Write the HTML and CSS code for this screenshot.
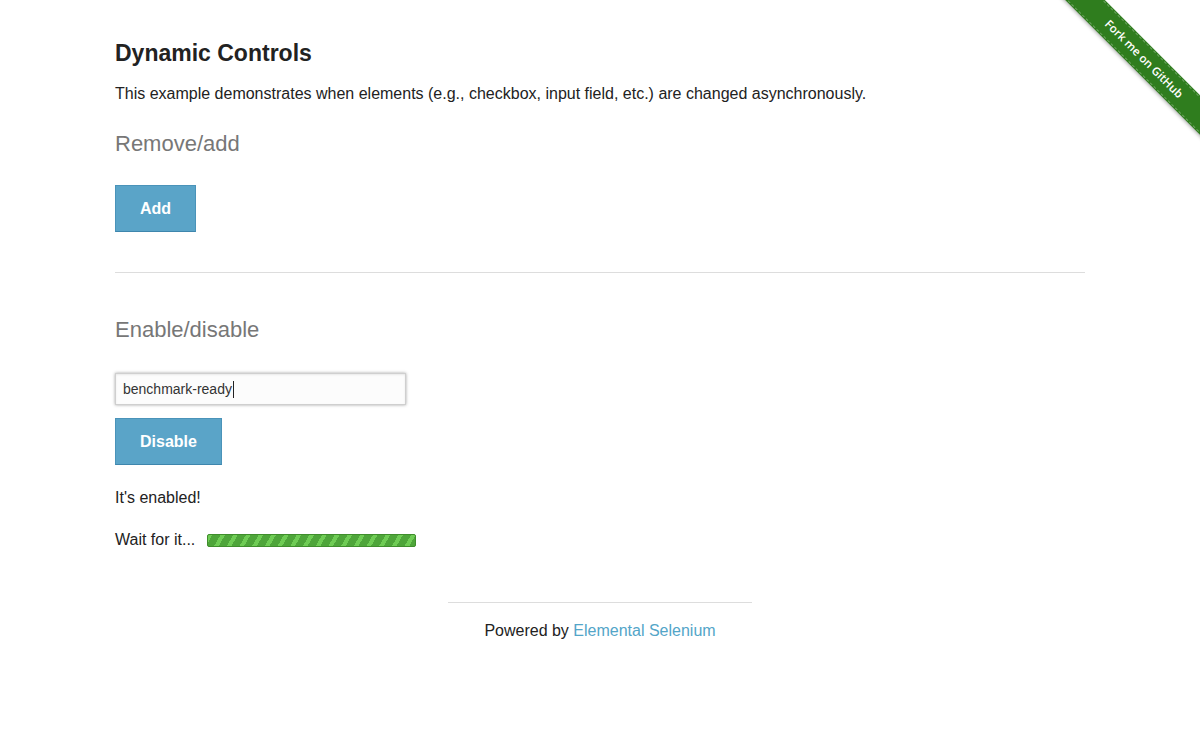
FILE: index.html
```html
<!DOCTYPE html>
<html>
<head>
<meta charset="utf-8">
<link rel="stylesheet" href="styles.css">
</head>
<body>
<div class="ribbon-wrap"><a class="ribbon" href="#">Fork me on GitHub</a></div>
<div class="row">
  <div class="example">
    <h3 class="title">Dynamic Controls</h3>
    <p class="lead">This example demonstrates when elements (e.g., checkbox, input field, etc.) are changed asynchronously.</p>
    <h4 class="sub">Remove/add</h4>
    <div class="form-block">
      <button class="btn btn-add" type="button">Add</button>
    </div>
    <hr class="divider">
    <h4 class="sub sub-second">Enable/disable</h4>
    <div class="form-block form-input">
      <div class="input"><span class="value">benchmark-ready</span><span class="caret"></span></div>
      <button class="btn btn-disable" type="button">Disable</button>
      <p class="message">It's enabled!</p>
      <div class="loading">Wait for it... <span class="bar"></span></div>
    </div>
  </div>
</div>
<div class="footer">
  <hr class="footer-rule">
  <div class="powered">Powered by <a href="#" class="link">Elemental Selenium</a></div>
</div>
</body>
</html>
```
FILE: styles.css
```css
html, body {
  margin: 0;
  padding: 0;
  background: #fff;
}
body {
  font-family: "Liberation Sans", Arial, Helvetica, sans-serif;
  color: #222;
  font-size: 16px;
}
.row {
  width: 970px;
  margin: 0 auto;
}
.example {
  padding-top: 38px;
}
.title {
  font-size: 23px;
  font-weight: bold;
  margin: 0;
  line-height: 30px;
  color: #222;
}
.lead {
  margin: 15px 0 0;
  line-height: 22px;
  font-size: 16px;
}
.sub {
  margin: 24px 0 0;
  font-weight: normal;
  font-size: 22px;
  line-height: 30px;
  color: #777;
}
.sub-second {
  margin-top: 42px;
}
.form-block {
  margin-top: 26px;
}
.btn {
  display: block;
  font-family: "Liberation Sans", Arial, sans-serif;
  font-weight: bold;
  font-size: 16px;
  color: #fff;
  background: #5aa4c8;
  border: 1px solid #4a93b9;
  border-bottom-color: #3e86ad;
  height: 47px;
  padding: 0;
  margin: 0;
  cursor: pointer;
}
.btn-add { width: 81px; }
.btn-disable { width: 107px; margin-top: 13px; }
.divider {
  border: 0;
  border-top: 1px solid #dddddd;
  margin: 40px 0 0;
  height: 0;
}
.form-input {
  margin-top: 28px;
}
.input {
  box-sizing: border-box;
  width: 291px;
  height: 32px;
  border: 1px solid #cfcfcf;
  box-shadow: 0 0 3px rgba(0,0,0,0.35), inset 0 1px 2px rgba(0,0,0,0.08);
  background: #fcfcfc;
  padding: 0 7px;
  display: flex;
  align-items: center;
  font-size: 14px;
  color: #333;
}
.caret {
  display: inline-block;
  width: 1px;
  height: 17px;
  background: #222;
  margin-left: 1px;
}
.message {
  margin: 22px 0 0;
  line-height: 22px;
  font-size: 16px;
}
.loading {
  margin-top: 20px;
  display: flex;
  align-items: center;
  line-height: 22px;
  white-space: pre;
}
.bar {
  display: inline-block;
  box-sizing: border-box;
  width: 209px;
  height: 13px;
  margin-left: 7px;
  margin-top: 1px;
  border: 1px solid #3f8e2c;
  border-radius: 2px;
  background-color: #4ea53a;
  background-image: repeating-linear-gradient(-60deg, #4ea53a 0 5px, #6fcc55 5px 9px, #4ea53a 9px 11px);
}
.footer {
  width: 304px;
  margin: 51px auto 0;
  text-align: center;
}
.footer-rule {
  border: 0;
  border-top: 1px solid #dddddd;
  margin: 0;
  height: 0;
}
.powered {
  margin-top: 17px;
  line-height: 22px;
  font-size: 16px;
}
.link {
  color: #53a5c8;
  text-decoration: none;
}
.ribbon-wrap {
  position: absolute;
  top: 0;
  right: 0;
  width: 149px;
  height: 149px;
  overflow: hidden;
}
.ribbon {
  position: absolute;
  top: 46px;
  right: -49px;
  width: 210px;
  transform: rotate(45deg);
  background: #2f7d1e;
  color: #fff;
  text-decoration: none;
  text-align: center;
  font-family: "Open Sans", sans-serif;
  font-size: 11.5px;
  font-weight: 600;
  line-height: 24px;
  border-top: 1px dashed rgba(255,255,255,0.3);
  border-bottom: 1px dashed rgba(255,255,255,0.3);
  box-shadow: 0 0 0 1px #2f7d1e, 0 2px 4px rgba(0,0,0,0.35);
}
```
